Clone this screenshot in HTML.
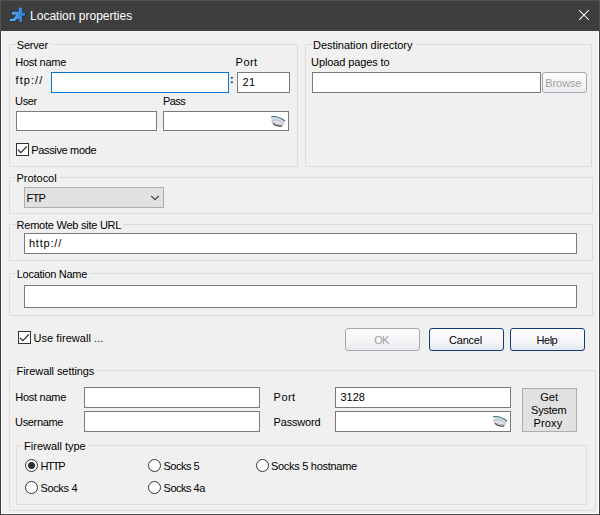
<!DOCTYPE html>
<html><head><meta charset="utf-8"><title>Location properties</title>
<style>
html,body{margin:0;padding:0;background:#f0f0f0;}
body{width:600px;height:515px;overflow:hidden;font-family:"Liberation Sans",sans-serif;}
#win{position:relative;width:600px;height:515px;background:#f0f0f0;overflow:hidden;}
#win div,#win span,#win svg{position:absolute;box-sizing:border-box;}
.t{white-space:nowrap;line-height:14px;height:14px;}
.titlebar{left:0;top:0;width:600px;height:31px;background:#3e3e3e;}
.gb{border:1px solid #dcdcdc;}
.lbg{background:#f0f0f0;height:4px;}
.inp{background:#fff;border:1px solid #7a7a7a;}
.inp.focus{border-color:#0078d7;}
.btnc{background:#e1e1e1;border:1px solid #adadad;}
.btn{border:1px solid #103c78;border-radius:3px;background:linear-gradient(#ffffff,#f6f6fa 60%,#e6e6f0);}
.btn.dis{border-color:#a8a8a8;background:linear-gradient(#fdfdfe,#f4f4f7 60%,#e9e9f0);}
.cb{width:13px;height:13px;background:#fff;border:1px solid #333;}
.rb{width:13px;height:13px;background:#fff;border:1px solid #333;border-radius:50%;}
.dot{width:7px;height:7px;background:#333;border-radius:50%;}

</style></head>
<body>
<div id="win">
<div class="titlebar"></div>
<div style="left:0;top:0;width:600px;height:1px;background:#525252"></div>
<div style="left:0;top:0;width:1px;height:31px;background:#525252"></div>
<div style="left:0;top:31px;width:1px;height:484px;background:#3c3c3c"></div>
<div style="left:599px;top:0;width:1px;height:31px;background:#505050"></div>
<div style="left:599px;top:31px;width:1px;height:484px;background:#404040"></div>
<div style="left:0;top:514px;width:600px;height:1px;background:#444"></div>
<div style="left:1px;top:31px;width:1px;height:483px;background:#fff"></div>
<div style="left:598px;top:31px;width:1px;height:483px;background:#fff"></div>
<div style="left:1px;top:513px;width:598px;height:1px;background:#fff"></div>
<svg style="left:579px;top:10px" width="11" height="11" viewBox="0 0 11 11"><path d="M0.5 0.5L9.5 9.5M9.5 0.5L0.5 9.5" stroke="#fff" stroke-width="1.05" stroke-linecap="square" fill="none"/></svg>
<!-- icon -->
<svg style="left:0;top:0" width="40" height="31" viewBox="0 0 40 31"><defs><linearGradient id="ig" x1="0" y1="0" x2="1" y2="0"><stop offset="0" stop-color="#5cb3f8"/><stop offset="1" stop-color="#2a78da"/></linearGradient></defs><path fill="url(#ig)" stroke="#20252e" stroke-opacity="0.75" stroke-width="1.2" paint-order="stroke" stroke-linejoin="round" d="M18.7 7.6H22.1V10.8L22.6 12.4L23.6 13.1H25V15.8H22.6L21.7 16.3L22.1 17.4V22H19.5V19.6L17.4 18.4L15.4 20.4L15.2 21.1H9.8V18.9L13 18.7L15 16.5L15.9 14.4L12.2 14.7L11.9 14.4V12.5L12.6 12L14.5 11.5L18.3 11.7L18.7 10.8Z"/><circle cx="20.4" cy="15.5" r="0.45" fill="#3a4250"/></svg>

<!-- group boxes -->
<div class="gb" style="left:9px;top:44px;width:289px;height:123px"></div>
<div class="gb" style="left:305px;top:44px;width:287px;height:123px"></div>
<div class="gb" style="left:9px;top:177px;width:584px;height:37px"></div>
<div class="gb" style="left:9px;top:224px;width:584px;height:37px"></div>
<div class="gb" style="left:9px;top:273px;width:584px;height:43px"></div>
<div class="gb" style="left:9px;top:370px;width:587px;height:141px"></div>
<div class="gb" style="left:16px;top:445px;width:571px;height:60px"></div>
<!-- label backgrounds -->
<div class="lbg" style="left:16px;top:42px;width:36px"></div>
<div class="lbg" style="left:312px;top:42px;width:104px"></div>
<div class="lbg" style="left:16px;top:175px;width:43px"></div>
<div class="lbg" style="left:16px;top:222px;width:108px"></div>
<div class="lbg" style="left:16px;top:271px;width:74px"></div>
<div class="lbg" style="left:16px;top:368px;width:81px"></div>
<div class="lbg" style="left:23px;top:443px;width:65px"></div>

<!-- server -->
<div class="inp focus" style="left:51px;top:72px;width:178px;height:21px"></div>
<div class="inp" style="left:237px;top:72px;width:53px;height:21px"></div>
<div class="inp" style="left:16px;top:111px;width:141px;height:20px"></div>
<div class="inp" style="left:163px;top:111px;width:126px;height:20px"></div>
<div class="cb" style="left:16px;top:143px"></div>
<svg style="left:16px;top:143px" width="13" height="13" viewBox="0 0 13 13"><path d="M2 6.7L4.8 9.6L10.8 3.5" stroke="#333" stroke-width="1.3" fill="none"/></svg>
<!-- dest -->
<div class="inp" style="left:312px;top:72px;width:229px;height:21px"></div>
<div class="btn dis" style="left:542px;top:72px;width:45px;height:21px"></div>
<!-- protocol -->
<div class="btnc" style="left:24px;top:187px;width:140px;height:21px"></div>
<svg style="left:150px;top:194px" width="11" height="8" viewBox="0 0 11 8"><path d="M1.3 2L5 5.7L8.7 2" stroke="#404040" stroke-width="1.1" fill="none"/></svg>
<!-- url -->
<div class="inp" style="left:24px;top:233px;width:553px;height:21px"></div>
<!-- location name -->
<div class="inp" style="left:24px;top:285px;width:553px;height:23px"></div>
<!-- use firewall -->
<div class="cb" style="left:18px;top:331px"></div>
<svg style="left:18px;top:331px" width="13" height="13" viewBox="0 0 13 13"><path d="M2 6.7L4.8 9.6L10.8 3.5" stroke="#333" stroke-width="1.3" fill="none"/></svg>
<div class="btn dis" style="left:345px;top:328px;width:75px;height:23px"></div>
<div class="btn" style="left:429px;top:328px;width:75px;height:23px"></div>
<div class="btn" style="left:510px;top:328px;width:75px;height:23px"></div>
<!-- firewall settings -->
<div class="inp" style="left:84px;top:387px;width:176px;height:21px"></div>
<div class="inp" style="left:84px;top:411px;width:176px;height:21px"></div>
<div class="inp" style="left:335px;top:387px;width:176px;height:21px"></div>
<div class="inp" style="left:335px;top:411px;width:176px;height:21px"></div>
<div class="btnc" style="left:522px;top:388px;width:55px;height:44px"></div>
<!-- radios -->
<div class="rb" style="left:25px;top:459px"></div><div class="dot" style="left:28px;top:462px"></div>
<div class="rb" style="left:25px;top:481px"></div>
<div class="rb" style="left:148px;top:459px"></div>
<div class="rb" style="left:148px;top:481px"></div>
<div class="rb" style="left:256px;top:459px"></div>
<!-- eye icons -->
<svg style="left:268px;top:112px" width="20" height="18" viewBox="268 111.5 20 18"><path d="M271.2 116.3C275 115.4 281 117 285 120.6C284.6 123.6 281 126 276.5 125.4C273 124.4 271 121 271.2 116.3Z" fill="#cbe1ea"/><path d="M271.8 120.2C275 118.4 281.5 120.2 284 123.4C281 125.6 274 123.8 271.8 120.2Z" stroke="#d9909c" stroke-width="0.7" fill="#d6e9ef"/><path d="M271.3 116.2C275 115.6 280.5 117.2 285 120.5" stroke="#3f6c7a" stroke-width="1.1" fill="none"/><path d="M272.8 122.8C275 125 279 126 282.3 125.4" stroke="#4a4446" stroke-width="1.2" fill="none"/></svg>
<svg style="left:490px;top:412px" width="20" height="18" viewBox="268 111.5 20 18"><path d="M271.2 116.3C275 115.4 281 117 285 120.6C284.6 123.6 281 126 276.5 125.4C273 124.4 271 121 271.2 116.3Z" fill="#cbe1ea"/><path d="M271.8 120.2C275 118.4 281.5 120.2 284 123.4C281 125.6 274 123.8 271.8 120.2Z" stroke="#d9909c" stroke-width="0.7" fill="#d6e9ef"/><path d="M271.3 116.2C275 115.6 280.5 117.2 285 120.5" stroke="#3f6c7a" stroke-width="1.1" fill="none"/><path d="M272.8 122.8C275 125 279 126 282.3 125.4" stroke="#4a4446" stroke-width="1.2" fill="none"/></svg>

<span class="t" id="t_title" style="left:30.02px;top:9.00px;font-size:12px;letter-spacing:0.006px;color:#fff">Location properties</span>
<span class="t" id="t_server" style="left:16.86px;top:38.00px;font-size:11px;letter-spacing:-0.229px;color:#000">Server</span>
<span class="t" id="t_host1" style="left:15.22px;top:55.00px;font-size:11px;letter-spacing:-0.264px;color:#000">Host name</span>
<span class="t" id="t_port1" style="left:235.59px;top:55.00px;font-size:11px;letter-spacing:0.465px;color:#000">Port</span>
<span class="t" id="t_ftp" style="left:15.62px;top:73.00px;font-size:11px;letter-spacing:1.057px;color:#000">ftp://</span>
<span class="t" id="t_colon" style="left:229.90px;top:72.00px;font-size:11px;letter-spacing:0.000px;color:#000;font-weight:bold">:</span>
<span class="t" id="t_v21" style="left:242.46px;top:75.00px;font-size:11px;letter-spacing:0.323px;color:#000">21</span>
<span class="t" id="t_user" style="left:15.12px;top:94.00px;font-size:11px;letter-spacing:-0.414px;color:#000">User</span>
<span class="t" id="t_pass" style="left:162.99px;top:94.00px;font-size:11px;letter-spacing:-0.595px;color:#000">Pass</span>
<span class="t" id="t_passive" style="left:31.29px;top:143.00px;font-size:11px;letter-spacing:-0.345px;color:#000">Passive mode</span>
<span class="t" id="t_dest" style="left:312.99px;top:38.00px;font-size:11px;letter-spacing:-0.040px;color:#000">Destination directory</span>
<span class="t" id="t_upload" style="left:311.08px;top:55.00px;font-size:11px;letter-spacing:-0.118px;color:#000">Upload pages to</span>
<span class="t" id="t_browse" style="left:545.33px;top:76.00px;font-size:11px;letter-spacing:-0.105px;color:#a0a0a0">Browse</span>
<span class="t" id="t_proto" style="left:16.59px;top:171.00px;font-size:11px;letter-spacing:-0.041px;color:#000">Protocol</span>
<span class="t" id="t_vftp" style="left:26.59px;top:191.00px;font-size:11px;letter-spacing:-0.819px;color:#000">FTP</span>
<span class="t" id="t_remote" style="left:16.59px;top:218.00px;font-size:11px;letter-spacing:-0.244px;color:#000">Remote Web site URL</span>
<span class="t" id="t_http" style="left:28.88px;top:236.00px;font-size:11px;letter-spacing:0.813px;color:#000">http://</span>
<span class="t" id="t_locname" style="left:16.80px;top:267.00px;font-size:11px;letter-spacing:-0.290px;color:#000">Location Name</span>
<span class="t" id="t_usefw" style="left:33.48px;top:331.00px;font-size:11px;letter-spacing:0.054px;color:#000">Use firewall ...</span>
<span class="t" id="t_ok" style="left:374.34px;top:333.00px;font-size:11px;letter-spacing:-0.805px;color:#a0a0a0">OK</span>
<span class="t" id="t_cancel" style="left:449.10px;top:333.00px;font-size:11px;letter-spacing:-0.244px;color:#000">Cancel</span>
<span class="t" id="t_help" style="left:536.55px;top:333.00px;font-size:11px;letter-spacing:-0.476px;color:#000">Help</span>
<span class="t" id="t_fwset" style="left:16.59px;top:364.00px;font-size:11px;letter-spacing:-0.067px;color:#000">Firewall settings</span>
<span class="t" id="t_host2" style="left:15.22px;top:390.00px;font-size:11px;letter-spacing:-0.264px;color:#000">Host name</span>
<span class="t" id="t_uname" style="left:15.12px;top:415.00px;font-size:11px;letter-spacing:-0.358px;color:#000">Username</span>
<span class="t" id="t_port2" style="left:273.59px;top:390.00px;font-size:11px;letter-spacing:0.465px;color:#000">Port</span>
<span class="t" id="t_pwd" style="left:273.59px;top:415.00px;font-size:11px;letter-spacing:-0.196px;color:#000">Password</span>
<span class="t" id="t_v3128" style="left:340.58px;top:390.00px;font-size:11px;letter-spacing:-0.077px;color:#000">3128</span>
<span class="t" id="t_get" style="left:540.14px;top:390.00px;font-size:11px;letter-spacing:0.156px;color:#000">Get</span>
<span class="t" id="t_system" style="left:531.07px;top:403.00px;font-size:11px;letter-spacing:-0.210px;color:#000">System</span>
<span class="t" id="t_proxy" style="left:533.41px;top:416.00px;font-size:11px;letter-spacing:0.176px;color:#000">Proxy</span>
<span class="t" id="t_fwtype" style="left:24.12px;top:439.00px;font-size:11px;letter-spacing:-0.018px;color:#000">Firewall type</span>
<span class="t" id="t_rhttp" style="left:40.41px;top:459.00px;font-size:11px;letter-spacing:-1.164px;color:#000">HTTP</span>
<span class="t" id="t_rs4" style="left:40.41px;top:481.00px;font-size:11px;letter-spacing:-0.333px;color:#000">Socks 4</span>
<span class="t" id="t_rs5" style="left:163.56px;top:459.00px;font-size:11px;letter-spacing:-0.514px;color:#000">Socks 5</span>
<span class="t" id="t_rs4a" style="left:163.56px;top:481.00px;font-size:11px;letter-spacing:-0.491px;color:#000">Socks 4a</span>
<span class="t" id="t_rs5h" style="left:270.96px;top:459.00px;font-size:11px;letter-spacing:-0.287px;color:#000">Socks 5 hostname</span>
</div>
</body></html>
